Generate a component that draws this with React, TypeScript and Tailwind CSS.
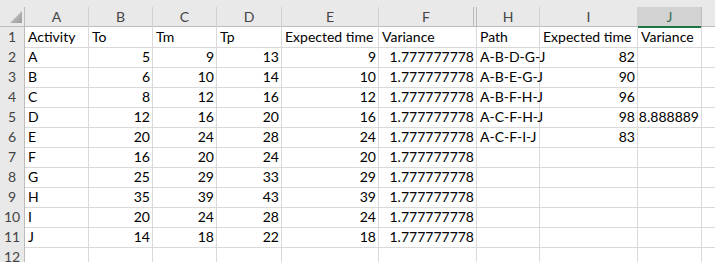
import React from 'react';

const cols = ['A', 'B', 'C', 'D', 'E', 'F', 'H', 'I', 'J'];

// one entry per data row; '' = empty cell, number = right aligned
type Cell = string | number;

const rows: Cell[][] = [
  ['Activity', 'To', 'Tm', 'Tp', 'Expected time', 'Variance', 'Path', 'Expected time', 'Variance'],
  ['A', 5, 9, 13, 9, '1.777777778', 'A-B-D-G-J', 82, ''],
  ['B', 6, 10, 14, 10, '1.777777778', 'A-B-E-G-J', 90, ''],
  ['C', 8, 12, 16, 12, '1.777777778', 'A-B-F-H-J', 96, ''],
  ['D', 12, 16, 20, 16, '1.777777778', 'A-C-F-H-J', 98, '8.888889'],
  ['E', 20, 24, 28, 24, '1.777777778', 'A-C-F-I-J', 83, ''],
  ['F', 16, 20, 24, 20, '1.777777778', '', '', ''],
  ['G', 25, 29, 33, 29, '1.777777778', '', '', ''],
  ['H', 35, 39, 43, 39, '1.777777778', '', '', ''],
  ['I', 20, 24, 28, 24, '1.777777778', '', '', ''],
  ['J', 14, 18, 22, 18, '1.777777778', '', '', ''],
  ['', '', '', '', '', '', '', '', ''],
];

const isNum = (v: Cell) => typeof v === 'number' || /^\d+\.\d+$/.test(String(v));

const gridCols = 'grid grid-cols-[25px_64px_64px_64px_65px_97px_98px_63px_98px_64px_1fr]';

export default function App() {
  return (
    <div
      className="w-[715px] h-[262px] overflow-hidden bg-white text-black"
      style={{ fontFamily: 'Lato, "Liberation Sans", sans-serif' }}
    >
      {/* top band */}
      <div className="h-[7px] bg-[#e9e9e9]" />

      {/* column headers */}
      <div className={`${gridCols} h-[20px] bg-[#e9e9e9] border-b border-[#bcbcbc] text-[14px] leading-[19px] text-[#444]`}>
        <div className="relative border-r border-[#bcbcbc]">
          <svg className="absolute left-[10px] top-[4px]" width="12" height="12" viewBox="0 0 12 12">
            <defs>
              <linearGradient id="cornerFill" x1="0" y1="0" x2="1" y2="1">
                <stop offset="0" stopColor="#d0d0d0" />
                <stop offset="1" stopColor="#9a9a9a" />
              </linearGradient>
            </defs>
            <polygon points="12,0 12,12 0,12" fill="url(#cornerFill)" />
          </svg>
        </div>
        {cols.map((c) =>
          c === 'J' ? (
            <div key={c} className="text-center bg-[#d2d2d2] text-[#3b6e4e] border-r border-[#bcbcbc] border-b-2 border-b-[#217346] -mb-px">
              {c}
            </div>
          ) : c === 'F' ? (
            <div key={c} className="flex border-r border-[#bcbcbc]">
              <span className="flex-1 text-center">{c}</span>
              <span className="w-px bg-[#bcbcbc] mr-[2px]" />
            </div>
          ) : (
            <div key={c} className="text-center border-r border-[#d0d0d0]">
              {c}
            </div>
          )
        )}
        <div />
      </div>

      {/* data rows */}
      {rows.map((r, i) => (
        <div key={i} className={`${gridCols} h-[20px] text-[14px] leading-[20px]`}>
          <div className="text-center bg-[#e9e9e9] text-[#444] border-r border-[#bcbcbc] border-b border-b-[#d4d4d4]">
            {i + 1}
          </div>
          {r.map((v, j) => (
            <div
              key={j}
              className={`border-r border-b border-[#d9d9d9] whitespace-nowrap overflow-visible ${
                isNum(v) ? 'text-right pr-[2px]' : 'text-left pl-[3px]'
              }`}
            >
              {v}
            </div>
          ))}
          <div className="border-b border-[#d9d9d9]" />
        </div>
      ))}
    </div>
  );
}
